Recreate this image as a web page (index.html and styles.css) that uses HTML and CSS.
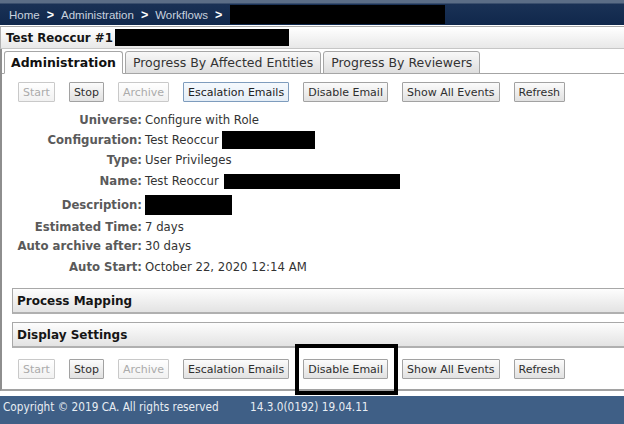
FILE: index.html
```html
<!DOCTYPE html>
<html>
<head>
<meta charset="utf-8">
<title>Workflow</title>
<link rel="stylesheet" href="styles.css">
</head>
<body>
<div class="page">
  <header class="topbar">
    <nav class="crumbs">
      <span>Home</span><b class="sep">&gt;</b>
      <span>Administration</span><b class="sep">&gt;</b>
      <span>Workflows</span><b class="sep">&gt;</b>
      <span class="redact crumb-redact"></span>
    </nav>
  </header>

  <div class="titlebar">
    <span class="title">Test Reoccur #1</span>
    <span class="redact title-redact"></span>
  </div>

  <div class="tabview">
    <div class="tabs">
      <div class="tab active">Administration</div>
      <div class="tab">Progress By Affected Entities</div>
      <div class="tab">Progress By Reviewers</div>
    </div>

    <main class="panel">
      <div class="actions">
        <button class="btn off">Start</button>
        <button class="btn">Stop</button>
        <button class="btn off">Archive</button>
        <button class="btn focus">Escalation Emails</button>
        <button class="btn">Disable Email</button>
        <button class="btn">Show All Events</button>
        <button class="btn">Refresh</button>
      </div>

      <div class="fields">
        <div class="field"><span class="label">Universe:</span><span class="value">Configure with Role</span></div>
        <div class="field"><span class="label">Configuration:</span><span class="value">Test Reoccur <span class="redact conf-redact"></span></span></div>
        <div class="field short"><span class="label">Type:</span><span class="value">User Privileges</span></div>
        <div class="field tall"><span class="label">Name:</span><span class="value">Test Reoccur <span class="redact name-redact"></span></span></div>
        <div class="field tall"><span class="label">Description:</span><span class="value"><span class="redact desc-redact"></span></span></div>
        <div class="field short"><span class="label">Estimated Time:</span><span class="value">7 days</span></div>
        <div class="field"><span class="label">Auto archive after:</span><span class="value">30 days</span></div>
        <div class="field mid"><span class="label">Auto Start:</span><span class="value">October 22, 2020 12:14 AM</span></div>
      </div>

      <section class="box first">Process Mapping</section>
      <section class="box">Display Settings</section>

      <div class="actions bottom">
        <button class="btn off">Start</button>
        <button class="btn">Stop</button>
        <button class="btn off">Archive</button>
        <button class="btn">Escalation Emails</button>
        <button class="btn">Disable Email</button>
        <button class="btn">Show All Events</button>
        <button class="btn">Refresh</button>
      </div>
    </main>
  </div>

  <footer class="footer">
    <span class="copy">Copyright &copy; 2019 CA. All rights reserved</span>
    <span class="version">14.3.0(0192) 19.04.11</span>
  </footer>

  <div class="highlight"></div>
</div>
</body>
</html>
```

FILE: styles.css
```css
* { box-sizing: border-box; }

html, body {
  margin: 0;
  padding: 0;
}

body {
  width: 624px;
  height: 424px;
  overflow: hidden;
  background: #ffffff;
  font-family: "DejaVu Sans", Verdana, sans-serif;
  color: #222222;
}

.page {
  position: relative;
  height: 424px;
  display: flex;
  flex-direction: column;
}

.redact {
  display: inline-block;
  background: #000000;
  vertical-align: middle;
}

/* ---------- top bar ---------- */
.topbar {
  height: 25px;
  padding-top: 4px;
  background: linear-gradient(#5b6d86 0, #5b6d86 3px, #1a3155 4px, #10284c 100%);
  display: flex;
}

.crumbs {
  display: flex;
  align-items: center;
  padding-left: 9px;
  font: 11.5px "Liberation Sans", Arial, sans-serif;
  color: #c8d2df;
}

.sep {
  color: #ffffff;
  font-size: 12.5px;
  margin: 0 7px;
}

.crumb-redact {
  width: 215px;
  height: 19px;
  margin-left: 1px;
}

/* ---------- title ---------- */
.titlebar {
  margin-top: 1px;
  height: 23px;
  border-top: 1px solid #a9a9a9;
  border-bottom: 1px solid #c6c6c6;
  border-left: 1px solid #b0b0b0;
  background: linear-gradient(#ffffff, #e8e8e8);
  display: flex;
  align-items: center;
  padding-left: 5px;
}

.title {
  font-weight: bold;
  font-size: 11.8px;
  color: #151515;
}

.title-redact {
  width: 174px;
  height: 17px;
  margin-left: 2px;
}

/* ---------- tabs ---------- */
.tabview {
  border-left: 2px solid #8e8e8e;
  border-bottom: 2px solid #a2a2a2;
}

.tabs {
  display: flex;
  gap: 2px;
  padding: 2px 0 0 2px;
  height: 25px;
  border-bottom: 1px solid #a4a4a4;
}

.tab {
  height: 23px;
  margin-bottom: -1px;
  padding: 3px 7px 0;
  font-size: 12.5px;
  color: #333333;
  border: 1px solid #a6a6a6;
  border-radius: 3px 3px 0 0;
  background: linear-gradient(#f8f8f8, #dedede);
  white-space: nowrap;
}

.tab.active {
  padding: 3px 6px 0;
  background: #ffffff;
  border-bottom-color: #ffffff;
  font-weight: bold;
  color: #111111;
}

/* ---------- panel ---------- */
.panel {
  padding-bottom: 10px;
}

.actions {
  display: flex;
  gap: 14px;
  padding: 8px 0 0 16px;
}

.actions.bottom {
  padding-top: 11px;
}

.btn {
  height: 20px;
  padding: 0 4px;
  font: 11px "DejaVu Sans", Verdana, sans-serif;
  color: #2e2e2e;
  border: 1px solid #a2a2a2;
  border-radius: 1px;
  background: linear-gradient(#fbfbfb, #e1e1e1);
  white-space: nowrap;
}

.btn.off {
  color: #ababab;
  border-color: #c9c9c9;
  background: linear-gradient(#ffffff, #f1f1f1);
}

.btn.focus {
  border-color: #7e9cbd;
  background: linear-gradient(#f5f9fd, #e4edf6);
  color: #222222;
}

/* ---------- fields ---------- */
.fields {
  margin-top: 8px;
  display: flex;
  flex-direction: column;
}

.field {
  display: flex;
  align-items: center;
  height: 20px;
  font-size: 11.7px;
  white-space: nowrap;
}

.field.short { height: 19px; }
.field.tall { height: 24px; }
.field.mid { height: 21px; }

.label {
  width: 140px;
  text-align: right;
  font-weight: bold;
  color: #5a5a5a;
}

.value {
  margin-left: 3px;
  color: #333333;
  display: flex;
  align-items: center;
}

.conf-redact {
  width: 93px;
  height: 18px;
  margin-left: 3px;
}

.name-redact {
  width: 176px;
  height: 15px;
  margin-left: 5px;
}

.desc-redact {
  width: 87px;
  height: 20px;
}

/* ---------- collapsible boxes ---------- */
.box {
  margin: 8px 0 0 10px;
  height: 26px;
  padding-left: 4px;
  display: flex;
  align-items: center;
  border: 1px solid #a8a8a8;
  border-bottom: 2px solid #b0b0b0;
  border-right: 0;
  background: linear-gradient(#fdfdfd, #e3e3e3);
  font-weight: bold;
  font-size: 12px;
  color: #151515;
}

.box.first {
  margin-top: 11px;
}

/* ---------- footer ---------- */
.footer {
  margin-top: 5px;
  flex: 1;
  background: #3f5f86;
  color: #e8edf3;
  font-family: "DejaVu Sans Condensed", "DejaVu Sans", sans-serif;
  font-stretch: semi-condensed;
  font-size: 11.7px;
  display: flex;
  padding: 3px 0 0 3px;
  line-height: 16px;
  white-space: nowrap;
}

.copy {
  width: 247px;
}

/* ---------- annotation ---------- */
.highlight {
  position: absolute;
  left: 295px;
  top: 344px;
  width: 103px;
  height: 51px;
  border: 4px solid #000000;
}
```
